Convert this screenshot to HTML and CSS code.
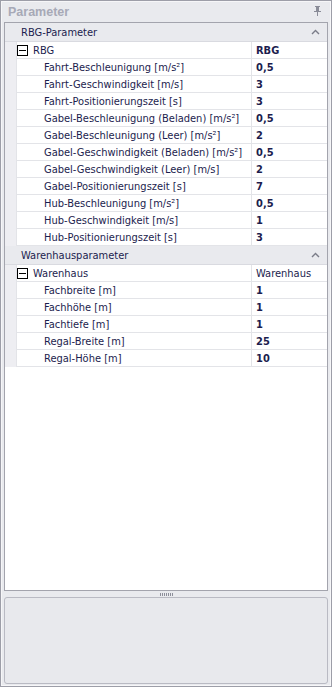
FILE: index.html
```html
<!DOCTYPE html>
<html>
<head>
<meta charset="utf-8">
<link rel="stylesheet" href="styles.css">
</head>
<body>
<div class="window">
  <div class="titlebar">
    <span class="title">Parameter</span>
    <svg class="pin" width="9" height="10" viewBox="0 0 9 10"><path d="M2 0h5v1H6v4h2v1H5v4H4V6H1V5h2V1H2z" fill="#8a8c98"/></svg>
  </div>
  <div class="grid">
    <div class="cat"><span>RBG-Parameter</span><svg class="caret" width="9" height="6" viewBox="0 0 9 6"><path d="M1 5l3.5-3.5L8 5" fill="none" stroke="#7a7c88" stroke-width="1.4"/></svg></div>
    <div class="row"><div class="gut"></div><div class="name grp"><span class="box"></span>RBG</div><div class="val b">RBG</div></div>
    <div class="row"><div class="gut"></div><div class="name">Fahrt-Beschleunigung [m/s²]</div><div class="val b">0,5</div></div>
    <div class="row"><div class="gut"></div><div class="name">Fahrt-Geschwindigkeit [m/s]</div><div class="val b">3</div></div>
    <div class="row"><div class="gut"></div><div class="name">Fahrt-Positionierungszeit [s]</div><div class="val b">3</div></div>
    <div class="row"><div class="gut"></div><div class="name">Gabel-Beschleunigung (Beladen) [m/s²]</div><div class="val b">0,5</div></div>
    <div class="row"><div class="gut"></div><div class="name">Gabel-Beschleunigung (Leer) [m/s²]</div><div class="val b">2</div></div>
    <div class="row"><div class="gut"></div><div class="name">Gabel-Geschwindigkeit (Beladen) [m/s²]</div><div class="val b">0,5</div></div>
    <div class="row"><div class="gut"></div><div class="name">Gabel-Geschwindigkeit (Leer) [m/s]</div><div class="val b">2</div></div>
    <div class="row"><div class="gut"></div><div class="name">Gabel-Positionierungszeit [s]</div><div class="val b">7</div></div>
    <div class="row"><div class="gut"></div><div class="name">Hub-Beschleunigung [m/s²]</div><div class="val b">0,5</div></div>
    <div class="row"><div class="gut"></div><div class="name">Hub-Geschwindigkeit [m/s]</div><div class="val b">1</div></div>
    <div class="row"><div class="gut"></div><div class="name">Hub-Positionierungszeit [s]</div><div class="val b">3</div></div>
    <div class="cat"><span>Warenhausparameter</span><svg class="caret" width="9" height="6" viewBox="0 0 9 6"><path d="M1 5l3.5-3.5L8 5" fill="none" stroke="#7a7c88" stroke-width="1.4"/></svg></div>
    <div class="row"><div class="gut"></div><div class="name grp"><span class="box"></span>Warenhaus</div><div class="val">Warenhaus</div></div>
    <div class="row"><div class="gut"></div><div class="name">Fachbreite [m]</div><div class="val b">1</div></div>
    <div class="row"><div class="gut"></div><div class="name">Fachhöhe [m]</div><div class="val b">1</div></div>
    <div class="row"><div class="gut"></div><div class="name">Fachtiefe [m]</div><div class="val b">1</div></div>
    <div class="row"><div class="gut"></div><div class="name">Regal-Breite [m]</div><div class="val b">25</div></div>
    <div class="row"><div class="gut"></div><div class="name">Regal-Höhe [m]</div><div class="val b">10</div></div>
  </div>
  <div class="splitter"><span class="dots"></span></div>
  <div class="desc"></div>
</div>
</body>
</html>
```
FILE: styles.css
```css
* { box-sizing: border-box; }
html, body { margin: 0; padding: 0; }
body {
  width: 332px; height: 687px;
  background: #e9eaee;
  font-family: Tahoma, "DejaVu Sans Condensed", "Liberation Sans", sans-serif;
  font-size: 11px;
  color: #1c1d4e;
}
.window {
  width: 332px; height: 687px;
  border: 1px solid #9d9ea8;
  box-shadow: inset 0 0 0 1px #f6f6f8;
  display: flex; flex-direction: column;
  padding: 0 3px 1px 3px;
}
.titlebar {
  height: 21px; flex: none;
  display: flex; align-items: center; justify-content: space-between;
  padding: 0 6px 0 4px;
}
.title {
  font-family: "Liberation Sans", Arial, sans-serif;
  font-weight: bold; font-size: 12.5px; color: #a7a9b7;
}
.pin { margin-top: -2px; }
.grid {
  height: 569px; flex: none;
  background: #fff;
  border: 1px solid #a3a4ad;
  display: flex; flex-direction: column;
}
.cat {
  height: 19px; flex: none;
  background: #e9eaee;
  border-bottom: 1px solid #d9dae0;
  display: flex; align-items: center; justify-content: space-between;
  padding: 0 7px 0 16px;
}
.row {
  height: 17px; flex: none;
  display: flex;
  border-bottom: 1px solid #e3e4e8;
}
.gut {
  width: 12px; flex: none;
  background: #eeeef2;
  border-right: 1px solid #e3e4e8;
  margin-bottom: -1px;
}
.name {
  flex: none; width: 235px;
  padding-left: 27px;
  border-right: 1px solid #e3e4e8;
  display: flex; align-items: center;
  white-space: nowrap; overflow: hidden;
}
.name.grp { padding-left: 0; }
.box {
  width: 11px; height: 11px; flex: none;
  border: 1px solid #000; margin: 0 5px 0 0;
  position: relative;
}
.box::after {
  content: ""; position: absolute; left: 1px; top: 4px; width: 7px; height: 1px; background: #000;
}
.val {
  flex: 1; padding-left: 4px;
  display: flex; align-items: center;
}
.b { font-weight: bold; }
.splitter {
  height: 6px; flex: none; display: flex; justify-content: center; align-items: center;
}
.dots {
  width: 13px; height: 3px;
  background: repeating-linear-gradient(90deg, #8c8e9a 0 1px, transparent 1px 2px);
}
.desc {
  flex: 1;
  border: 1px solid #b9bac3;
  border-radius: 3px;
  background: #e8e9ed;
  margin-bottom: 1px;
}
```
